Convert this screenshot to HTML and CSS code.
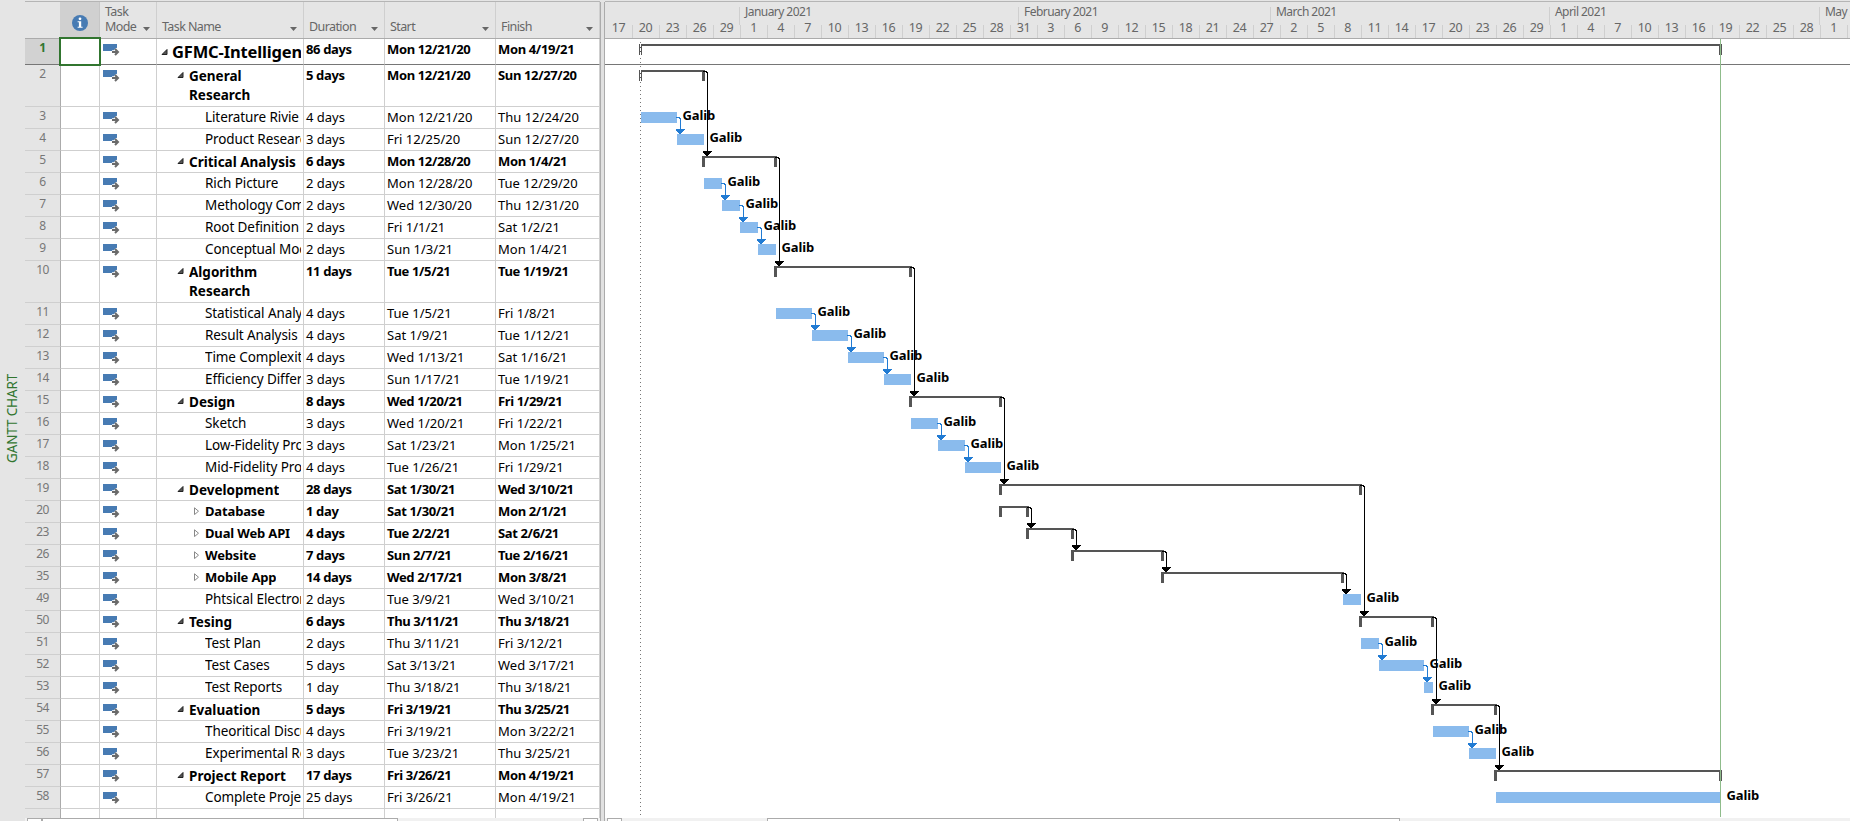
FILE: index.html
```html
<!DOCTYPE html>
<html lang="en">
<head>
<meta charset="utf-8">
<title>Gantt Chart</title>
<link rel="stylesheet" href="styles.css">
</head>
<body>
<div class="app">
  <div class="view-name"><span>GANTT CHART</span></div>
  <section class="sheet">
    <header class="sheet-head">
      <div class="h-num"></div>
      <div class="h-info"><svg width="16" height="16" viewBox="0 0 16 16"><circle cx="8" cy="8" r="8" fill="#477bb3"/><path d="M8 2.4a1.4 1.4 0 1 1 0 2.8a1.4 1.4 0 1 1 0-2.8zM5.6 6.2h3.6v5.6h1.4v1H5.6v-1h1.3V7.2H5.6z" fill="#fff"/></svg></div>
      <div class="h-cell"><span>Task<br>Mode</span><i class="drop"></i></div>
      <div class="h-cell"><span>Task Name</span><i class="drop"></i></div>
      <div class="h-cell"><span>Duration</span><i class="drop"></i></div>
      <div class="h-cell"><span>Start</span><i class="drop"></i></div>
      <div class="h-cell"><span>Finish</span><i class="drop"></i></div>
    </header>
    <div class="rows" id="rows"></div>
    <footer class="scroll left"><i class="sbtn"></i><i class="thumb"></i><i class="track"></i><i class="sbtn"></i></footer>
  </section>
  <div class="splitter"></div>
  <section class="chart">
    <header class="scale">
      <div class="months" id="months"></div>
      <div class="days" id="days"></div>
    </header>
    <svg class="plot" id="plot" width="1245" height="779" viewBox="605 39 1245 779" shape-rendering="crispEdges"></svg>
    <footer class="scroll right"><i class="sbtn"></i><i class="track"></i><i class="thumb"></i></footer>
  </section>
</div>
<script src="app.js"></script>
</body>
</html>
```

FILE: styles.css
```css
* { box-sizing: border-box; }
body { margin: 0; background: #e5e5e5; overflow: hidden; }
.app {
  display: grid;
  grid-template-columns: 25px 575px 5px 1245px;
  width: 1850px;
  height: 821px;
  padding-top: 1px;
  background: #e5e5e5;
  font-family: "Noto Sans", "Open Sans", sans-serif;
  color: #000;
}
.view-name { display: flex; align-items: center; justify-content: center; padding: 15px 1px 0 0; }
.view-name span {
  writing-mode: vertical-rl;
  transform: rotate(180deg);
  color: #31752f;
  font-size: 13.5px;
  line-height: 18px;
  letter-spacing: -0.15px;
  white-space: nowrap;
}
.sheet, .chart { display: flex; flex-direction: column; min-width: 0; border-top: 1px solid #b5b5b5; }
.sheet-head {
  display: grid;
  grid-template-columns: 35px 40px 57px 147px 81px 111px 104px;
  height: 37px;
  border-bottom: 1px solid #ababab;
  color: #676767;
  font-size: 12.5px;
  line-height: 15px;
}
.h-info { display: flex; justify-content: center; padding-top: 13px; background: #d0d0d0; border-right: 1px solid #c6c6c6; }
.h-cell {
  display: flex;
  align-items: flex-end;
  justify-content: space-between;
  padding: 0 6px 4px 5px;
  border-right: 1px solid #cfcfcf;
  letter-spacing: -0.6px;
}
.drop { width: 7px; height: 4px; margin-bottom: 3px; background: #676767; clip-path: polygon(0 0, 100% 0, 50% 100%); }
.rows { height: 779px; }
.row {
  display: grid;
  grid-template-columns: 36px 39px 57px 147px 81px 111px 104px;
  height: 22px;
  font-size: 13px;
  line-height: 21px;
  letter-spacing: 0;
  white-space: nowrap;
}
.row > div { border-right: 1px solid #cfcfcf; border-bottom: 1px solid #cfcfcf; overflow: hidden; padding-left: 2px; background: #fff; }
.row .num {
  padding: 0;
  background: #e5e5e5;
  border-right-color: #ababab;
  color: #777;
  font-size: 12px;
  line-height: 18px;
  letter-spacing: -0.6px;
  text-align: center;
}
.row .mode { padding-left: 3px; }
.row .name { display: flex; align-items: flex-start; padding-left: 5px; font-size: 13.5px; letter-spacing: -0.1px; }
.row .name span { overflow: hidden; white-space: nowrap; margin-right: 2px; }
.row.bold { letter-spacing: -0.36px; }
.row.bold .name { letter-spacing: 0; line-height: 23px; }
.row.bold .name.sub { font-size: 13px; line-height: 21px; letter-spacing: -0.15px; }
.row.tall { height: 42px; }
.row.tall .name span { line-height: 19px; padding-top: 2px; }
.row.first { height: 26px; }
.row.first > div { border-bottom-color: #767676; }
.row.first .num { background: #d2d2d2; color: #31752f; font-weight: 700; }
.row.first .name span { font-size: 16.5px; line-height: 26px; letter-spacing: -0.15px; }
.row.last { height: 9px; }
.row.last > div { border-bottom: 0; }
.bold { font-weight: 700; }
.row.bold .num { font-weight: 400; letter-spacing: -0.6px; }
.row.bold.first .num { font-weight: 700; }
.row.first .ind { outline: 2px solid #31752f; position: relative; z-index: 1; outline-offset: -1px; margin: -1px 0 0 -1px; border: 0; }
.mode svg { display: block; margin-top: 5px; }
.tw { flex: none; width: 8px; height: 8px; }
.tw svg { display: block; width: 8px; height: 8px; }
.lv0 { margin: 9px 3px 0 -1px; }
.lv1 { margin: 6px 4px 0 15px; }
.lv2 { margin: 6px 4px 0 31px; }
.leaf { width: 43px; margin: 0; }
.splitter { border-left: 1px solid #ababab; border-right: 1px solid #ababab; background: #e1e1e1; margin-top: 1px; }
.chart { background: #fff; }
.scale { height: 37px; background: #e5e5e5; border-bottom: 1px solid #ababab; color: #676767; font-size: 12.5px; overflow: hidden; }
.months, .days { display: flex; }
.months > div { flex: none; height: 18px; margin-top: 5px; border-left: 1px solid #cfcfcf; padding-left: 5px; line-height: 10px; font-size: 12px; letter-spacing: -0.55px; white-space: nowrap; }
.months > div:first-child { border-left-color: transparent; }
.days > div { flex: none; width: 27px; height: 13px; border-left: 1px solid #cfcfcf; padding-right: 1px; text-align: center; line-height: 6px; letter-spacing: -0.5px; }
.days > div:first-child { border-left-color: transparent; }
.plot { display: block; flex: none; }
.plot text { font: 700 13px "Noto Sans", sans-serif; letter-spacing: -0.1px; }
.bar { fill: #8abbed; }
.sum { fill: #555; }
.link { fill: none; stroke: #000; }
.link.blue { stroke: #217bd3; }
.tip { fill: #000; }
.tip.blue { fill: #217bd3; }
.scroll { display: flex; height: 3px; background: #f1f1f1; }
.scroll i { display: block; border: 1px solid #ababab; border-bottom: 0; background: #fff; }
.scroll .track { border: 0; background: #f1f1f1; }
.sbtn { width: 15px; }
.left { padding: 0 2px; }
.left .thumb { width: 356px; }
.left .track { flex: 1; }
.right { padding-left: 2px; }
.right .track { width: 145px; }
.right .thumb { width: 633px; }
```

FILE: app.js
```js
// id, level, kind (s = summary, c = collapsed summary, t = task), name, duration, start, finish, first day, days
const T = [
  [1,0,'s','GFMC-Intelligen','86 days','Mon 12/21/20','Mon 4/19/21',0,120],
  [2,1,'s','General<br>Research','5 days','Mon 12/21/20','Sun 12/27/20',0,7],
  [3,2,'t','Literature Rivie','4 days','Mon 12/21/20','Thu 12/24/20',0,4],
  [4,2,'t','Product Researc','3 days','Fri 12/25/20','Sun 12/27/20',4,3],
  [5,1,'s','Critical Analysis','6 days','Mon 12/28/20','Mon 1/4/21',7,8],
  [6,2,'t','Rich Picture','2 days','Mon 12/28/20','Tue 12/29/20',7,2],
  [7,2,'t','Methology Com','2 days','Wed 12/30/20','Thu 12/31/20',9,2],
  [8,2,'t','Root Definition','2 days','Fri 1/1/21','Sat 1/2/21',11,2],
  [9,2,'t','Conceptual Moc','2 days','Sun 1/3/21','Mon 1/4/21',13,2],
  [10,1,'s','Algorithm<br>Research','11 days','Tue 1/5/21','Tue 1/19/21',15,15],
  [11,2,'t','Statistical Analy','4 days','Tue 1/5/21','Fri 1/8/21',15,4],
  [12,2,'t','Result Analysis','4 days','Sat 1/9/21','Tue 1/12/21',19,4],
  [13,2,'t','Time Complexit','4 days','Wed 1/13/21','Sat 1/16/21',23,4],
  [14,2,'t','Efficiency Differ','3 days','Sun 1/17/21','Tue 1/19/21',27,3],
  [15,1,'s','Design','8 days','Wed 1/20/21','Fri 1/29/21',30,10],
  [16,2,'t','Sketch','3 days','Wed 1/20/21','Fri 1/22/21',30,3],
  [17,2,'t','Low-Fidelity Pro','3 days','Sat 1/23/21','Mon 1/25/21',33,3],
  [18,2,'t','Mid-Fidelity Pro','4 days','Tue 1/26/21','Fri 1/29/21',36,4],
  [19,1,'s','Development','28 days','Sat 1/30/21','Wed 3/10/21',40,40],
  [20,2,'c','Database','1 day','Sat 1/30/21','Mon 2/1/21',40,3],
  [23,2,'c','Dual Web API','4 days','Tue 2/2/21','Sat 2/6/21',43,5],
  [26,2,'c','Website','7 days','Sun 2/7/21','Tue 2/16/21',48,10],
  [35,2,'c','Mobile App','14 days','Wed 2/17/21','Mon 3/8/21',58,20],
  [49,2,'t','Phtsical Electron','2 days','Tue 3/9/21','Wed 3/10/21',78,2],
  [50,1,'s','Tesing','6 days','Thu 3/11/21','Thu 3/18/21',80,8],
  [51,2,'t','Test Plan','2 days','Thu 3/11/21','Fri 3/12/21',80,2],
  [52,2,'t','Test Cases','5 days','Sat 3/13/21','Wed 3/17/21',82,5],
  [53,2,'t','Test Reports','1 day','Thu 3/18/21','Thu 3/18/21',87,1],
  [54,1,'s','Evaluation','5 days','Fri 3/19/21','Thu 3/25/21',88,7],
  [55,2,'t','Theoritical Discu','4 days','Fri 3/19/21','Mon 3/22/21',88,4],
  [56,2,'t','Experimental Re','3 days','Tue 3/23/21','Thu 3/25/21',92,3],
  [57,1,'s','Project Report','17 days','Fri 3/26/21','Mon 4/19/21',95,25],
  [58,2,'t','Complete Proje','25 days','Fri 3/26/21','Mon 4/19/21',95,25]
];
const LINKS = [[2,5],[5,10],[10,15],[15,19],[19,50],[50,54],[54,57],[20,23],[23,26],[26,35],[35,49],
  [3,4],[6,7],[7,8],[8,9],[11,12],[12,13],[13,14],[16,17],[17,18],[51,52],[52,53],[55,56]];

const arrow = 'M9 8H15M12 5l3 3l-3 3';
const modeIcon = `<svg width="17" height="12" viewBox="0 0 17 12"><path d="M0 0h14v7H0z" fill="#477bb3"/><path d="${arrow}" fill="none" stroke="#fff" stroke-width="3.6"/><path d="${arrow}" fill="none" stroke="#6a6a6a" stroke-width="2"/></svg>`;
const open = '<svg viewBox="0 0 8 8"><path d="M6 1.500v5H1z" fill="#555" stroke="#222"/></svg>';
const shut = '<svg viewBox="0 0 8 8"><path d="M1.500 .8v6.800l4-3.400z" fill="#fff" stroke="#888"/></svg>';

let html = '', y = 39;
const pos = {};
for (const [id, lv, kind, name, dur, start, fin, d0, n] of T) {
  const h = id === 1 ? 26 : (id === 2 || id === 10) ? 42 : 22;
  pos[id] = { y, x0: 641 + d0 * 9, x1: 641 + (d0 + n) * 9, kind };
  const cls = 'row' + (kind !== 't' ? ' bold' : '') + (id === 1 ? ' first' : '') + (h === 42 ? ' tall' : '');
  const tw = kind === 't' ? '<i class="tw leaf"></i>' : `<i class="tw lv${lv}">${kind === 's' ? open : shut}</i>`;
  html += `<div class="${cls}"><div class="num">${id}</div><div class="ind"></div><div class="mode">${modeIcon}</div>` +
    `<div class="name${kind === 'c' ? ' sub' : ''}">${tw}<span>${name}</span></div><div>${dur}</div><div>${start}</div><div>${fin}</div></div>`;
  y += h;
}
html += '<div class="row last"><div class="num"></div><div></div><div></div><div></div><div></div><div></div><div></div></div>';
document.getElementById('rows').innerHTML = html;

// Time scale: 9px per day, one label every three days
document.getElementById('months').innerHTML =
  [['', 134], ['January 2021', 279], ['February 2021', 252], ['March 2021', 279], ['April 2021', 270], ['May 2021', 80]]
    .map(([t, w]) => `<div style="width:${w}px">${t}</div>`).join('');
let days = '';
for (let i = 0; i < 47; i++) {
  days += `<div>${new Date(Date.UTC(2020, 11, 17 + i * 3)).getUTCDate()}</div>`;
}
document.getElementById('days').innerHTML = days;

let g = '<path d="M605 64.500H1850" stroke="#767676"/>';
let labels = '';
for (const id in pos) {
  const p = pos[id];
  if (p.kind === 't') {
    g += `<rect class="bar" x="${p.x0}" y="${p.y + 5}" width="${p.x1 - p.x0}" height="11"/>`;
    labels += `<text x="${p.x1 + 5.5}" y="${p.y + 13}">Galib</text>`;
  } else {
    g += `<path class="sum" d="M${p.x0 - 2} ${p.y + 5}H${p.x1 + 1}V${p.y + 16}h-3v-9H${p.x0 + 1}v9h-3z"/>`;
  }
}
g += labels;
for (const [a, b] of LINKS) {
  const p = pos[a], q = pos[b], blue = p.kind === 't' ? ' blue' : '';
  const x = p.x1 + 3.5, top = p.kind === 't' ? p.y + 10.5 : p.y + 6.5, end = q.y + 5;
  g += `<path class="link${blue}" d="M${p.x1 - 1} ${top}h3l1.500 1.500V${end - 4}"/>`;
  g += `<path class="tip${blue}" d="M${x - 4.5} ${end - 5}h9v1h-1v1h-1v1h-1v1h-1v1h-2v-1h-1v-1h-1v-1h-1v-1h-1z"/>`;
}
g += '<path d="M640.500 42V818" stroke="#777" stroke-dasharray="1 3"/><path d="M640.500 44V55M640.500 70V81" stroke="#fff" stroke-dasharray="3 1"/>';
g += '<path d="M1720.500 39V817" stroke="#8fbc8b"/>';
document.getElementById('plot').innerHTML = g;
```
